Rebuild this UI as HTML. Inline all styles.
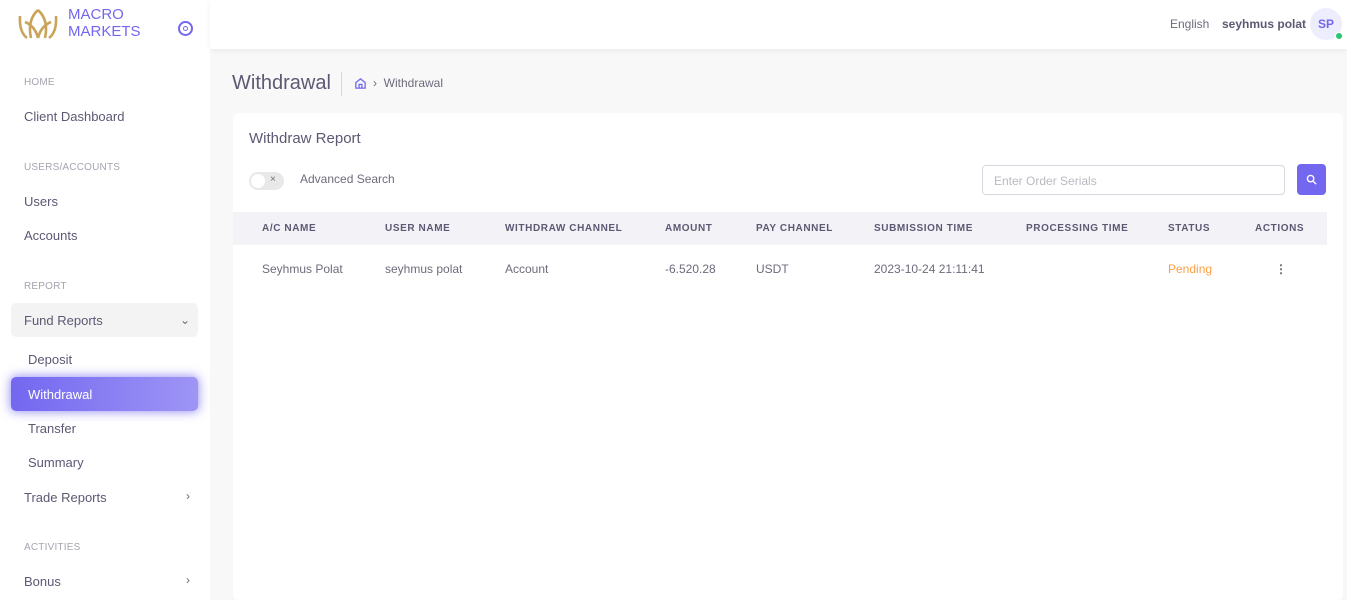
<!DOCTYPE html>
<html style="overflow:hidden;height:600px"><head><style>
*{box-sizing:border-box;margin:0;padding:0}
body{width:1347px;height:600px;overflow:hidden;background:#f8f8f8;font-family:"Liberation Sans",sans-serif;color:#6e6b7b;position:relative}
.sb{position:absolute;left:0;top:0;width:210px;height:600px;background:#fff}
.hdr{position:absolute;left:210px;top:0;width:1137px;height:49px;background:#fff;box-shadow:0 2px 6px rgba(0,0,0,.06)}
.sec{position:absolute;left:24px;font-size:10px;color:#a6a4b0;letter-spacing:.2px}
.it{position:absolute;left:24px;font-size:13px;color:#5e5873}
.chev{position:absolute;right:20px;font-size:12px;color:#6e6b7b}
.card{position:absolute;left:233px;top:113px;width:1110px;height:487px;background:#fff;border-radius:6px}
th{font-size:10px;font-weight:bold;color:#5e5873;letter-spacing:.6px;text-align:left;height:33px;background:#f3f2f7}
td{font-size:12px;color:#6e6b7b;height:48px}
</style></head><body>
<div class="sb">
<svg style="position:absolute;left:17px;top:8px" width="42" height="32" viewBox="0 0 42 32"><g fill="none" stroke="#c9a458" stroke-width="2.6"><path d="M3 8 Q2 24 10 30"/><path d="M39 8 Q40 24 32 30"/><path d="M21 2 Q10 12 14 30"/><path d="M21 2 Q32 12 28 30"/><path d="M8 14 Q18 18 21 30"/><path d="M34 14 Q24 18 21 30"/></g></svg>
<div style="position:absolute;left:68px;top:6px;font-size:15px;line-height:17px;color:#7367f0">MACRO<br>MARKETS</div>
<div style="position:absolute;left:178px;top:21px;width:15px;height:15px;border:2px solid #7367f0;border-radius:50%"><div style="width:5px;height:5px;border:1.5px solid #7367f0;border-radius:50%;margin:3px"></div></div>
<div class="sec" style="top:77px">HOME</div>
<div class="it" style="top:109px">Client Dashboard</div>
<div class="sec" style="top:162px">USERS/ACCOUNTS</div>
<div class="it" style="top:194px">Users</div>
<div class="it" style="top:228px">Accounts</div>
<div class="sec" style="top:281px">REPORT</div>
<div style="position:absolute;left:11px;top:303px;width:187px;height:34px;background:#f3f3f3;border-radius:5px"></div>
<div class="it" style="top:313px">Fund Reports</div><div class="chev" style="top:313px">⌄</div>
<div class="it" style="top:352px;left:28px">Deposit</div>
<div style="position:absolute;left:11px;top:377px;width:187px;height:34px;background:linear-gradient(90deg,#7367f0,#9e95f5);border-radius:5px;box-shadow:0 0 10px 1px rgba(115,103,240,.7)"></div>
<div class="it" style="top:387px;left:28px;color:#fff">Withdrawal</div>
<div class="it" style="top:421px;left:28px">Transfer</div>
<div class="it" style="top:455px;left:28px">Summary</div>
<div class="it" style="top:490px">Trade Reports</div><div class="chev" style="top:489px">›</div>
<div class="sec" style="top:542px">ACTIVITIES</div>
<div class="it" style="top:574px">Bonus</div><div class="chev" style="top:573px">›</div>
</div>
<div class="hdr">
<div style="position:absolute;left:960px;top:17px;font-size:12px;color:#6e6b7b">English</div>
<div style="position:absolute;left:1012px;top:17px;font-size:12px;font-weight:bold;color:#5e5873">seyhmus polat</div>
<div style="position:absolute;left:1100px;top:8px;width:32px;height:32px;border-radius:50%;background:#eeedfd;color:#7367f0;font-weight:bold;font-size:12px;text-align:center;line-height:32px">SP</div>
<div style="position:absolute;left:1125px;top:32px;width:8px;height:8px;border-radius:50%;background:#28c76f;border:1px solid #fff"></div>
</div>
<div style="position:absolute;left:232px;top:72px;font-size:20px;color:#5e5873">Withdrawal</div>
<div style="position:absolute;left:341px;top:72px;width:1px;height:24px;background:#d8d6de"></div>
<svg style="position:absolute;left:354px;top:77px" width="13" height="13" viewBox="0 0 14 14" fill="none" stroke="#7367f0" stroke-width="1.4"><path d="M2 6 L7 2 L12 6 V12 H2 Z M5.5 12 V8 H8.5 V12"/></svg>
<div style="position:absolute;left:373px;top:76px;font-size:12px;color:#6e6b7b">›&nbsp;&nbsp;Withdrawal</div>
<div class="card">
<div style="position:absolute;left:16px;top:17px;font-size:15px;color:#5e5873">Withdraw Report</div>
<div style="position:absolute;left:16px;top:59px;width:35px;height:18px;border-radius:9px;background:#e8e8e8"><div style="position:absolute;left:2px;top:2px;width:14px;height:14px;border-radius:50%;background:#fff"></div><div style="position:absolute;left:21px;top:2px;font-size:10px;color:#6e6b7b">×</div></div>
<div style="position:absolute;left:67px;top:59px;font-size:12px;color:#6e6b7b">Advanced Search</div>
<div style="position:absolute;left:749px;top:52px;width:303px;height:30px;border:1px solid #d8d6de;border-radius:4px;font-size:12px;color:#b9b9c3;padding:8px 11px">Enter Order Serials</div>
<div style="position:absolute;left:1064px;top:51px;width:29px;height:31px;background:#7367f0;border-radius:4px"><svg style="margin:10px 9px" width="11" height="11" viewBox="0 0 12 12" fill="none" stroke="#fff" stroke-width="1.5"><circle cx="5" cy="5" r="3.5"/><path d="M8 8 L11 11"/></svg></div>
<table style="position:absolute;left:0;top:99px;width:1094px;border-collapse:collapse">
<tr><th style="padding-left:29px;width:152px">A/C NAME</th><th style="width:120px">USER NAME</th><th style="width:160px">WITHDRAW CHANNEL</th><th style="width:91px">AMOUNT</th><th style="width:118px">PAY CHANNEL</th><th style="width:152px">SUBMISSION TIME</th><th style="width:142px">PROCESSING TIME</th><th style="width:87px">STATUS</th><th>ACTIONS</th></tr>
<tr><td style="padding-left:29px">Seyhmus Polat</td><td>seyhmus polat</td><td>Account</td><td style="padding-left:-3px">-6.520.28</td><td>USDT</td><td>2023-10-24 21:11:41</td><td></td><td style="color:#ff9f43">Pending</td><td style="padding-left:20px;font-weight:bold">⋮</td></tr>
</table>
</div>
</body></html>
